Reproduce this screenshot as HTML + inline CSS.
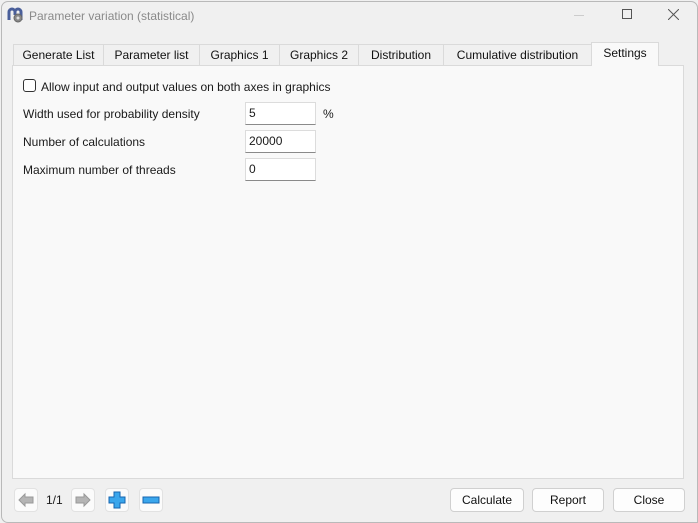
<!DOCTYPE html>
<html><head><meta charset="utf-8"><style>
*{box-sizing:border-box;margin:0;padding:0}
body{width:698px;height:523px;background:#fff;font-family:"Liberation Sans",sans-serif;font-size:12px;color:#1a1a1a;overflow:hidden;position:relative}
#win{position:absolute;left:0;top:0;width:698px;height:523px;background:#f0f0f0;overflow:hidden}
#frame{position:absolute;left:1px;top:1px;width:697px;height:522px;border:1px solid #b9b9b9;border-radius:7px 7px 0 7px;pointer-events:none;z-index:5}
.abs{position:absolute}
.title{left:29px;top:9px;color:#8a8a8a;font-size:12px}
.tab{position:absolute;top:44px;height:21px;border:1px solid #dadada;border-bottom:none;background:#f0f0f0;text-align:center;line-height:21px;font-size:12px;color:#111}
.tab.sel{top:42px;height:24px;background:#f9f9f9;z-index:2}
#panel{position:absolute;left:12px;top:65px;width:672px;height:414px;background:#f9f9f9;border:1px solid #dadada}
.lbl{position:absolute;left:22px;font-size:12px}
.inp{position:absolute;left:244px;width:71px;height:23px;background:#fff;border:1px solid #dcdcdc;border-bottom:1px solid #8a8a8a;padding-left:3px;line-height:21px;font-size:12px}
.btn{position:absolute;top:488px;height:24px;background:#fdfdfd;border:1px solid #d0d0d0;border-radius:4px;text-align:center;line-height:22px;font-size:12px;color:#111}
.sb{position:absolute;top:488px;width:24px;height:24px;background:#fbfbfb;border:1px solid #e2e2e2;border-radius:4px}
</style></head><body>
<div id="win">
<svg class="abs" style="left:7px;top:6px" width="18" height="18" viewBox="0 0 18 18">
<path d="M2 14V6a3 3 0 0 1 6 0v3M8 9V6a3 3 0 0 1 6 0v8" fill="none" stroke="#4a5f9a" stroke-width="3"/>
<circle cx="11" cy="12" r="4" fill="#888" stroke="#666"/>
<circle cx="11" cy="12" r="1.5" fill="#ddd"/>
</svg>
<div class="abs title">Parameter variation (statistical)</div>
<div class="abs" style="left:574px;top:15px;width:10px;height:1px;background:#ccc"></div>
<div class="abs" style="left:622px;top:9px;width:10px;height:10px;border:1px solid #555"></div>
<svg class="abs" style="left:668px;top:9px" width="11" height="11"><path d="M0 0L11 11M11 0L0 11" stroke="#555" stroke-width="1"/></svg>

<div class="tab" style="left:13px;width:91px">Generate List</div>
<div class="tab" style="left:103px;width:97px">Parameter list</div>
<div class="tab" style="left:199px;width:81px">Graphics 1</div>
<div class="tab" style="left:279px;width:80px">Graphics 2</div>
<div class="tab" style="left:358px;width:86px">Distribution</div>
<div class="tab" style="left:443px;width:149px">Cumulative distribution</div>
<div class="tab sel" style="left:591px;width:68px">Settings</div>

<div id="panel"></div>
<div class="abs" style="left:23px;top:79px;width:13px;height:13px;border:1px solid #333;border-radius:3px;background:#fff"></div>
<div class="lbl" style="left:41px;top:80px">Allow input and output values on both axes in graphics</div>
<div class="lbl" style="left:23px;top:107px">Width used for probability density</div>
<div class="inp" style="left:245px;top:102px">5</div>
<div class="lbl" style="left:323px;top:107px">%</div>
<div class="lbl" style="left:23px;top:135px">Number of calculations</div>
<div class="inp" style="left:245px;top:130px">20000</div>
<div class="lbl" style="left:23px;top:163px">Maximum number of threads</div>
<div class="inp" style="left:245px;top:158px">0</div>

<div class="sb" style="left:14px"><svg width="22" height="22"><path d="M4 11L10 5V8H18V14H10V17Z" fill="#b5b5b5" stroke="#999"/></svg></div>
<div class="abs" style="left:46px;top:493px">1/1</div>
<div class="sb" style="left:71px"><svg width="22" height="22"><path d="M18 11L12 5V8H4V14H12V17Z" fill="#b5b5b5" stroke="#999"/></svg></div>
<div class="sb" style="left:105px"><svg width="22" height="22"><path d="M8 3H14V8H19V14H14V19H8V14H3V8H8Z" fill="#3aa6ec" stroke="#1565b0"/></svg></div>
<div class="sb" style="left:139px"><svg width="22" height="22"><rect x="3" y="8" width="16" height="6" fill="#3aa6ec" stroke="#1565b0"/></svg></div>

<div class="btn" style="left:450px;width:74px">Calculate</div>
<div class="btn" style="left:532px;width:72px">Report</div>
<div class="btn" style="left:613px;width:72px">Close</div>
</div>
<div id="frame"></div>
</body></html>
